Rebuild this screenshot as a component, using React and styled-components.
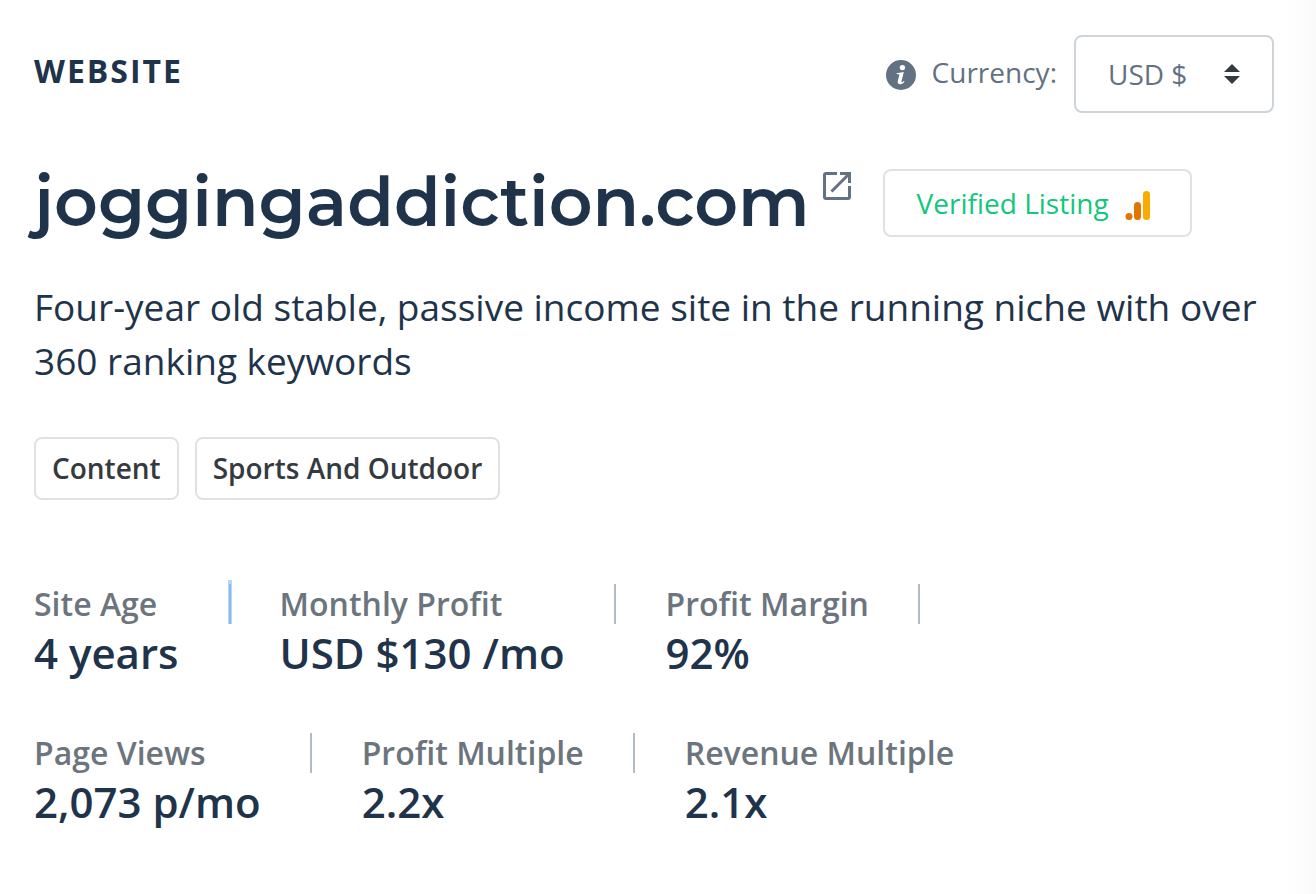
import React, { useState } from "react";
import styled, { createGlobalStyle } from "styled-components";

const firstRow = [
  { label: "Site Age", value: "4 years", divider: "active" },
  { label: "Monthly Profit", value: "USD $130 /mo", divider: "plain" },
  { label: "Profit Margin", value: "92%", divider: "plain" },
];

const secondRow = [
  { label: "Page Views", value: "2,073 p/mo", divider: "plain" },
  { label: "Profit Multiple", value: "2.2x", divider: "plain" },
  { label: "Revenue Multiple", value: "2.1x" },
];

const StatRow = ({ stats }) => (
  <Row>
    {stats.map(({ label, value, divider }) => (
      <Stat key={label}>
        <StatText>
          <StatLabel>{label}</StatLabel>
          <StatValue>{value}</StatValue>
        </StatText>
        {divider && <Divider $active={divider === "active"} />}
      </Stat>
    ))}
  </Row>
);

export default function App() {
  const [currency, setCurrency] = useState("USD");

  return (
    <>
      <GlobalStyle />
      <Page>
        <TopBar>
          <Kind>WEBSITE</Kind>
          <CurrencyBox>
            <InfoIcon viewBox="0 0 30 30" aria-hidden="true">
              <circle cx="15" cy="15" r="15" fill="#627282" />
              <circle cx="16.4" cy="7.6" r="2.7" fill="#fff" />
              <path
                d="M10.6 13.2 17.8 12.1 15.6 21c-.2.9 0 1.3.5 1.2.6-.1 1.2-.7 1.7-1.3l.8.6c-1.2 1.7-2.7 2.7-4.4 2.7-2 0-2.9-1.2-2.4-3.2l1.5-5.9c.2-.7 0-.9-.8-.9l-2.1-.1z"
                fill="#fff"
              />
            </InfoIcon>
            <CurrencyLabel htmlFor="currency">Currency:</CurrencyLabel>
            <SelectWrap>
              <Select
                id="currency"
                value={currency}
                onChange={(e) => setCurrency(e.target.value)}
              >
                <option value="USD">USD $</option>
                <option value="EUR">EUR €</option>
                <option value="GBP">GBP £</option>
              </Select>
              <Arrows viewBox="0 0 16 20" aria-hidden="true">
                <path d="M8 0 16 8H0zM0 12h16l-8 8z" fill="#343a40" />
              </Arrows>
            </SelectWrap>
          </CurrencyBox>
        </TopBar>

        <TitleRow>
          <Title>joggingaddiction.com</Title>
          <OpenLink href="#" aria-label="Open website">
            <svg width="28" height="28" viewBox="0 0 28 28" fill="none">
              <path
                d="M14 1.5H3Q1.5 1.5 1.5 3v22q0 1.5 1.5 1.5h22q1.5 0 1.5-1.5V14M17 1.5h9.5V11M26 2 8.5 19.5"
                stroke="#627282"
                strokeWidth="3"
              />
            </svg>
          </OpenLink>
          <Verified type="button">
            Verified Listing
            <BarsIcon viewBox="0 0 26 29" aria-hidden="true">
              <circle cx="4" cy="25.5" r="3.5" fill="#e37400" />
              <rect x="9" y="11" width="7" height="18" rx="3.5" fill="#e37400" />
              <rect x="18" y="0" width="7" height="29" rx="3.5" fill="#f9ab00" />
            </BarsIcon>
          </Verified>
        </TitleRow>

        <Tagline>
          Four-year old stable, passive income site in the running niche with
          over 360 ranking keywords
        </Tagline>

        <Tags>
          <Tag>Content</Tag>
          <Tag>Sports And Outdoor</Tag>
        </Tags>

        <StatRow stats={firstRow} />
        <StatRow stats={secondRow} />
      </Page>
    </>
  );
}

const GlobalStyle = createGlobalStyle`
  * {
    box-sizing: border-box;
  }

  body {
    margin: 0;
    background: #fff;
    color: #1f344b;
    font-family: "Open Sans", sans-serif;
  }
`;

const Page = styled.main`
  min-height: 100vh;
  padding: 35px 42px 12px 34px;
  background: linear-gradient(to left, #f9f9f9, #fdfdfd 12px, #fff 36px);
`;

const TopBar = styled.header`
  display: flex;
  justify-content: space-between;
  align-items: center;
`;

const Kind = styled.div`
  padding-bottom: 6px;
  font-size: 32px;
  line-height: 48px;
  font-weight: 700;
  letter-spacing: 2px;
`;

const CurrencyBox = styled.div`
  display: flex;
  align-items: center;
`;

const InfoIcon = styled.svg`
  width: 30px;
  height: 30px;
  margin: 2px 16px 0 0;
`;

const CurrencyLabel = styled.label`
  margin-right: 17px;
  padding-bottom: 4px;
  color: #627282;
  font-size: 28px;
  line-height: 42px;
`;

const SelectWrap = styled.div`
  position: relative;
`;

const Select = styled.select`
  appearance: none;
  display: block;
  width: 200px;
  height: 78px;
  padding: 0 32px;
  border: 2px solid #ced4da;
  border-radius: 8px;
  background: #fff;
  color: #627282;
  font-family: inherit;
  font-size: 28px;
`;

const Arrows = styled.svg`
  position: absolute;
  top: 29px;
  right: 34px;
  width: 16px;
  height: 20px;
  pointer-events: none;
`;

const TitleRow = styled.div`
  display: flex;
  align-items: flex-start;
  margin-top: 56px;
`;

const Title = styled.h1`
  margin: 0;
  font-family: Montserrat, Inter, sans-serif;
  font-size: 68px;
  line-height: 66px;
  font-weight: 600;
`;

const OpenLink = styled.a`
  margin: 3px 32px 0 13px;
  line-height: 0;
`;

const Verified = styled.button`
  display: flex;
  align-items: center;
  gap: 16px;
  height: 68px;
  padding: 0 39px 0 32px;
  border: 2px solid #dee2e6;
  border-radius: 8px;
  background: #fff;
  color: #10c77b;
  font-family: inherit;
  font-size: 28px;
  white-space: nowrap;
`;

const BarsIcon = styled.svg`
  width: 26px;
  height: 29px;
  margin-top: 5px;
`;

const Tagline = styled.p`
  margin: 43px 0 0;
  font-size: 37px;
  line-height: 54px;
`;

const Tags = styled.div`
  display: flex;
  gap: 16px;
  margin: 49px 0 80px;
`;

const Tag = styled.span`
  padding: 8px 16px;
  border: 2px solid #dee2e6;
  border-radius: 8px;
  color: #343a40;
  font-size: 28px;
  line-height: 43px;
  font-weight: 600;
`;

const Row = styled.div`
  display: flex;
  flex-wrap: wrap;
  margin-bottom: 51px;
`;

const Stat = styled.div`
  display: flex;
  align-items: flex-start;
`;

const StatText = styled.div`
  padding-right: 49px;
`;

const StatLabel = styled.div`
  color: #6c757d;
  font-size: 32px;
  line-height: 48px;
  font-weight: 600;
`;

const StatValue = styled.div`
  font-size: 42px;
  line-height: 50px;
  font-weight: 600;
`;

const Divider = styled.div`
  width: ${({ $active }) => ($active ? "4px" : "2px")};
  height: ${({ $active }) => ($active ? "44px" : "40px")};
  margin: ${({ $active }) => ($active ? "0 48px 0 0" : "4px 50px 0 0")};
  border: ${({ $active }) => ($active ? "1px solid #b3d7ff" : "none")};
  border-top-width: ${({ $active }) => ($active ? "4px" : "0")};
  border-bottom-width: 0;
  background: ${({ $active }) => ($active ? "#90b8e8" : "#b1bbc4")};
`;
